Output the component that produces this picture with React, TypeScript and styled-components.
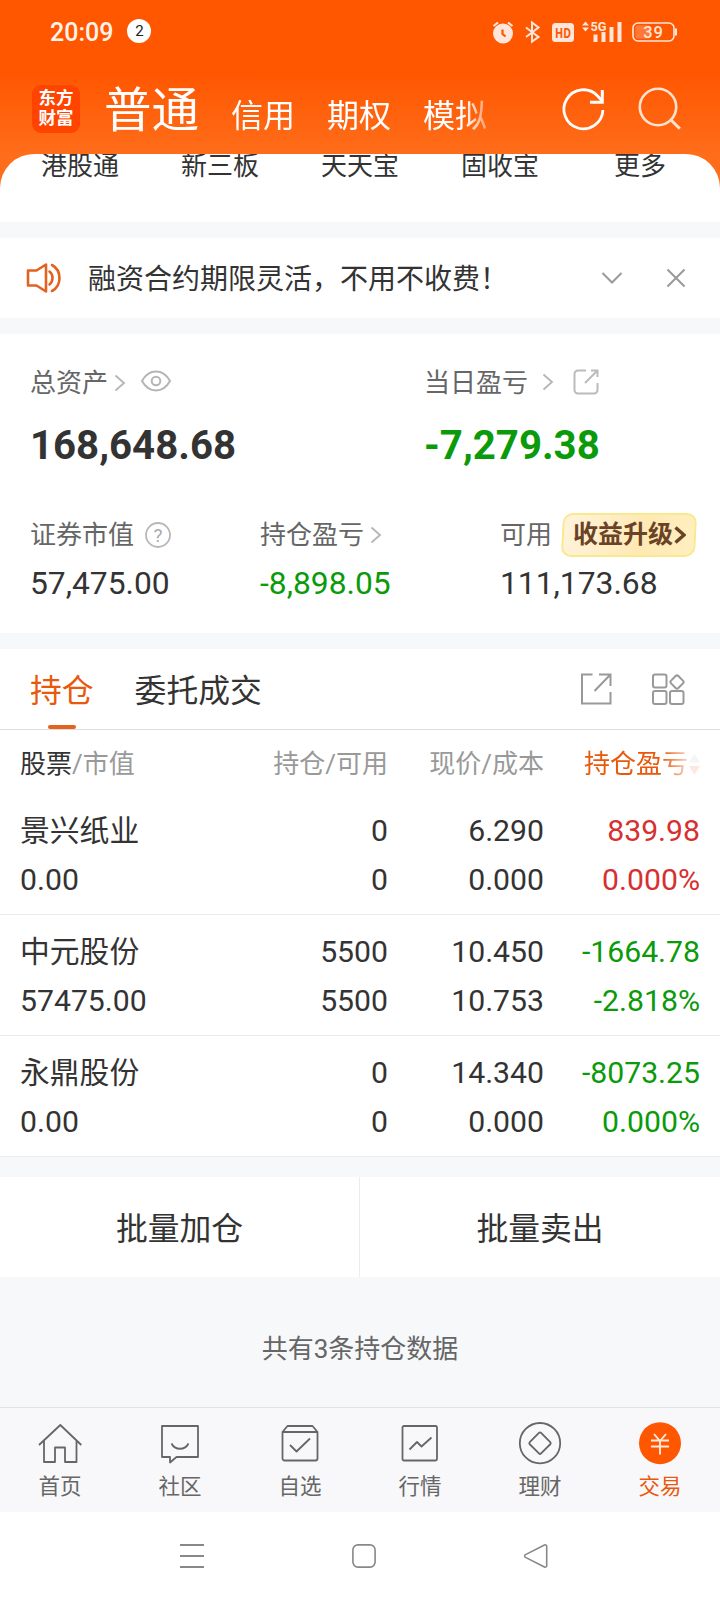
import React from "react";
import styled, { createGlobalStyle, css } from "styled-components";

const GlobalStyle = createGlobalStyle`
  * { box-sizing: border-box; }
  body {
    margin: 0;
    background: #f7f8fa;
    font-family: Roboto, "Noto Sans CJK SC", sans-serif;
    color: #333;
  }
  svg { display: block; flex: none; fill: none; }
`;

const ORANGE = "#e8590c";
const GREEN = "#0a9a0a";
const RED = "#d63031";

const Page = styled.div`
  width: 720px;
  height: 1600px;
  display: flex;
  flex-direction: column;
  overflow: hidden;
  background: #f7f8fa;
`;

/* ---------- header ---------- */

const Header = styled.header`
  height: 222px;
  flex: none;
  background: linear-gradient(#ff5600 0, #ff5600 72px, #ff6d1a 154px, #ff6d1a 222px);
`;

const StatusBar = styled.div`
  height: 64px;
  display: flex;
  align-items: center;
  padding: 0 42px 0 50px;
  color: #fff3ea;
`;

const Clock = styled.span`
  margin-top: 2px;
  font-size: 25px;
  font-weight: 500;
  line-height: 30px;
`;

const NoticeCount = styled.span`
  width: 24px;
  height: 24px;
  margin: 0 auto 2px 14px;
  border-radius: 50%;
  background: #fff;
  color: #222;
  font-size: 15px;
  line-height: 24px;
  text-align: center;
`;

const StatusIcons = styled.div`
  display: flex;
  gap: 8px;
`;

const TitleBar = styled.div`
  height: 90px;
  display: flex;
  align-items: center;
  padding: 0 36px 0 32px;
`;

const Logo = styled.div`
  width: 48px;
  height: 48px;
  padding-top: 3px;
  border-radius: 9px;
  background: #ff4400;
  color: #fff;
  font-size: 17.5px;
  font-weight: 700;
  line-height: 20px;
  text-align: center;
`;

const AccountTabs = styled.nav`
  width: 384px;
  margin: 9px auto 0 24px;
  display: flex;
  align-items: baseline;
  gap: 32px;
  white-space: nowrap;
  -webkit-mask-image: linear-gradient(90deg, #000 360px, rgba(0, 0, 0, 0.35) 384px);
  mask-image: linear-gradient(90deg, #000 360px, rgba(0, 0, 0, 0.35) 384px);
`;

const AccountTab = styled.span<{ $active?: boolean }>`
  color: #fff;
  font-size: ${(p) => (p.$active ? 47.5 : 32)}px;
  line-height: 64px;
`;

const TitleActions = styled.div`
  display: flex;
  gap: 28px;
`;

const QuickLinks = styled.nav`
  height: 68px;
  display: grid;
  grid-template-columns: repeat(5, 1fr);
  padding: 0 10px;
  border-radius: 34px 34px 0 0;
  background: #fff;
  overflow: hidden;
`;

const QuickLink = styled.span`
  margin-top: -4px;
  font-size: 26px;
  line-height: 32px;
  text-align: center;
`;

/* ---------- notice ---------- */

const Notice = styled.section`
  height: 80px;
  flex: none;
  margin: 16px 0;
  display: flex;
  align-items: center;
  padding: 0 32px 0 26px;
  background: #fff;
`;

const NoticeText = styled.span`
  margin: 3px auto 0 26px;
  font-size: 28px;
  line-height: 40px;
`;

const NoticeActions = styled.div`
  display: flex;
  gap: 40px;
`;

/* ---------- assets ---------- */

const Assets = styled.section`
  height: 299px;
  flex: none;
  padding: 28px 0 0 30px;
  background: #fff;
`;

const AssetRow = styled.div<{ $columns: string }>`
  display: grid;
  grid-template-columns: ${(p) => p.$columns};
`;

const MajorRow = styled(AssetRow)`
  height: 152px;
`;

const AssetLabel = styled.div`
  height: 42px;
  display: flex;
  align-items: center;
  font-size: 26px;
  line-height: 40px;
  color: #666;
  white-space: nowrap;
`;

const IconSlot = styled.span<{ $left: number; $up?: number }>`
  margin-left: ${(p) => p.$left}px;
  margin-bottom: ${(p) => p.$up ?? 0}px;
`;

const MajorValue = styled.div<{ $color?: string }>`
  margin-top: 18px;
  font-size: 40.2px;
  font-weight: 700;
  line-height: 48px;
  color: ${(p) => p.$color ?? "#333"};
`;

const MinorValue = styled.div<{ $color?: string }>`
  margin-top: 7px;
  font-size: 31.8px;
  line-height: 40px;
  color: ${(p) => p.$color ?? "#333"};
`;

const Upgrade = styled.span`
  position: relative;
  z-index: 0;
  width: 136px;
  height: 44px;
  margin-left: 9px;
  padding-left: 12px;
  display: flex;
  align-items: center;
  gap: 1px;
  color: #6a4327;
  font-size: 25px;
  font-weight: 700;
  &::before {
    content: "";
    position: absolute;
    z-index: -1;
    inset: 0 1px;
    border: 2px solid #fae88c;
    border-radius: 10px;
    background: linear-gradient(100deg, #fff3db, #ffe9b4 60%, #ffefc0);
    transform: skewX(-3deg);
  }
`;

/* ---------- positions ---------- */

const Positions = styled.section`
  flex: none;
  margin-top: 16px;
  background: #fff;
`;

const PositionTabs = styled.div`
  height: 81px;
  display: flex;
  padding: 0 35px 0 30px;
  border-bottom: 1px solid #dedede;
`;

const PositionTab = styled.div<{ $active?: boolean }>`
  height: 80px;
  margin-right: 41px;
  display: flex;
  flex-direction: column;
  align-items: center;
  justify-content: space-between;
  padding-top: 16px;
  font-size: 31.8px;
  line-height: 52px;
  color: ${(p) => (p.$active ? ORANGE : "#333")};
  ${(p) =>
    p.$active &&
    css`
      &::after {
        content: "";
        width: 28px;
        height: 4px;
        border-radius: 2px;
        background: #e5611c;
      }
    `}
`;

const PositionTools = styled.div`
  margin-left: auto;
  display: flex;
  align-items: center;
  gap: 39px;
`;

const Columns = styled.div`
  display: grid;
  grid-template-columns: 1fr 150px 156px 156px;
  padding: 0 20px;
`;

const TableHead = styled(Columns)`
  height: 64px;
  padding-top: 4px;
  align-items: center;
  font-size: 26px;
  line-height: 40px;
  color: #999;
`;

const HeadCell = styled.span<{ $first?: boolean }>`
  text-align: ${(p) => (p.$first ? "left" : "right")};
`;

const Strong = styled.span`
  color: #333;
`;

const SortedHead = styled.span`
  display: flex;
  align-items: center;
  justify-content: flex-end;
  gap: 1px;
  color: ${ORANGE};
  -webkit-mask-image: linear-gradient(90deg, #000 117px, rgba(0, 0, 0, 0.2) 146px);
  mask-image: linear-gradient(90deg, #000 117px, rgba(0, 0, 0, 0.2) 146px);
`;

const PositionRow = styled(Columns)`
  height: 121px;
  padding-top: 12px;
  border-bottom: 1px solid #ebebeb;
`;

const Cell = styled.div<{ $first?: boolean; $color?: string }>`
  display: flex;
  flex-direction: column;
  align-items: ${(p) => (p.$first ? "flex-start" : "flex-end")};
  font-size: 30.2px;
  line-height: 49px;
  color: ${(p) => p.$color ?? "#333"};
`;

const Amount = styled.span`
  height: 49px;
`;

const StockName = styled(Amount)`
  font-size: 29.8px;
`;

const BatchActions = styled.div`
  height: 100px;
  flex: none;
  margin-top: 20px;
  display: grid;
  grid-template-columns: 359px 1fr;
  background: #fff;
`;

const BatchButton = styled.button`
  border: 0;
  padding: 0 0 3px;
  background: none;
  font: inherit;
  font-size: 31.8px;
  color: #333;
  & + & { border-left: 1px solid #ececec; }
`;

const Summary = styled.p`
  flex: 1;
  margin: 0;
  padding-top: 52px;
  font-size: 26px;
  line-height: 40px;
  color: #666;
  text-align: center;
`;

/* ---------- bottom bars ---------- */

const TabBar = styled.nav`
  height: 105px;
  flex: none;
  display: grid;
  grid-template-columns: repeat(6, 1fr);
  border-top: 1px solid #e2e2e4;
  background: #f8f8fa;
`;

const TabItem = styled.div<{ $active?: boolean }>`
  display: flex;
  flex-direction: column;
  align-items: center;
  padding-top: 14px;
  font-size: 21.5px;
  line-height: 30px;
  color: ${(p) => (p.$active ? ORANGE : "#666")};
  svg { margin-bottom: 6px; }
`;

const SystemNav = styled.div`
  height: 88px;
  flex: none;
  display: flex;
  align-items: center;
  gap: 148px;
  padding-left: 180px;
  background: #fff;
`;

/* ---------- icons ---------- */

const AlarmIcon = () => (
  <svg width="22" height="24" viewBox="0 0 22 24" stroke="#ffe6da">
    <circle cx="11" cy="13.5" r="10" fill="#ffe6da" stroke="none" />
    <path d="M1.5 6 6 2.5M20.5 6 16 2.5" strokeWidth="2.2" />
    <path d="M10.5 9.5v4.5l3 2.5" stroke="#ff5600" strokeWidth="2.2" />
  </svg>
);

const BluetoothIcon = () => (
  <svg width="22" height="24" viewBox="0 0 22 24" stroke="#ffe6da" strokeWidth="2">
    <path d="M4 7.500 16.500 17l-6.500 4.500v-19l6.500 5L4 17" />
  </svg>
);

const HdText = styled.text`
  font: 700 13.5px "Open Sans", sans-serif;
  fill: #ff5600;
`;

const HdIcon = () => (
  <svg width="22" height="24" viewBox="0 0 22 24">
    <rect y="3" width="22" height="19" rx="3.5" fill="#ffe6da" />
    <HdText x="11" y="17.600" textAnchor="middle" textLength="16" lengthAdjust="spacingAndGlyphs">HD</HdText>
  </svg>
);

const NetworkText = styled.text`
  font: 700 12.5px Roboto, sans-serif;
  fill: #ffe6da;
`;

const SignalIcon = () => (
  <svg width="42" height="24" viewBox="0 0 42 24">
    <g fill="#ffe6da">
      <path d="M0 5.500 3.500 1.500 7 5.500zM0 7.500h7L3.500 11.500z" />
      <rect x="11.500" y="14.500" width="4" height="7.500" />
      <rect x="19.500" y="12" width="4" height="10" />
      <rect x="27.500" y="7" width="4" height="15" />
      <rect x="35.500" y="2" width="4" height="20" />
    </g>
    <NetworkText x="8.500" y="10.500" textLength="16" lengthAdjust="spacingAndGlyphs">5G</NetworkText>
  </svg>
);

const BatteryText = styled.text`
  font: 500 16.5px Roboto, sans-serif;
  letter-spacing: 0.8px;
  fill: #ffe6da;
`;

const BatteryIcon = () => (
  <svg width="46" height="24" viewBox="0 0 46 24">
    <rect x="3.500" y="5.500" width="15" height="13" rx="2" fill="#ff7a3a" />
    <rect x="1" y="3" width="41" height="18" rx="5" stroke="#ffe6da" strokeWidth="1.600" />
    <path d="M44 8.500v7" stroke="#ffe6da" strokeWidth="2" />
    <BatteryText x="21.500" y="17.800" textAnchor="middle">39</BatteryText>
  </svg>
);

const RefreshIcon = () => (
  <svg width="48" height="48" viewBox="560 85 48 48" stroke="#fff" strokeWidth="2.800">
    <path d="M602.900 110a19.500 19.500 0 1 1-5.500-14.300l5 5.500" />
    <path d="M602.300 90v12.300H590" strokeWidth="3" />
  </svg>
);

const SearchIcon = () => (
  <svg width="48" height="48" viewBox="636 85 48 48" stroke="#ffe2d0" strokeWidth="2.600">
    <circle cx="658" cy="107" r="18.200" />
    <path d="m670.500 119.500 9.300 9.300" strokeWidth="3" />
  </svg>
);

const SpeakerIcon = () => (
  <svg width="36" height="32" viewBox="0 0 36 32" stroke="#e2631f" strokeWidth="2.600" strokeLinejoin="round">
    <path d="M2 8.500h8.500L20 2.500v27l-9.500-6H2z" />
    <path d="M23.500 9.500c4 3 4 10 0 13M26 3c10 5.500 10 20.500 0 26" strokeLinecap="round" />
  </svg>
);

const DownIcon = () => (
  <svg width="24" height="24" viewBox="0 0 24 24" stroke="#999" strokeWidth="2">
    <path d="m2.500 7 9.500 9.500L21.500 7" />
  </svg>
);

const CloseIcon = () => (
  <svg width="24" height="24" viewBox="0 0 24 24" stroke="#999" strokeWidth="2">
    <path d="m3.500 3.500 17 17M20.500 3.500l-17 17" />
  </svg>
);

const ChevronIcon = ({ color = "#b5b5b5", weight = 1.8 }) => (
  <svg width="12" height="18" viewBox="0 0 12 18" stroke={color} strokeWidth={weight}>
    <path d="m1.500 1.500 8.500 7.500-8.500 7.500" />
  </svg>
);

const EyeIcon = () => (
  <svg width="30" height="22" viewBox="0 0 30 22" stroke="#b5b5b5" strokeWidth="2">
    <path d="M1 11C8-1.600 22-1.600 29 11 22 23.600 8 23.600 1 11z" strokeLinejoin="round" />
    <circle cx="15" cy="11" r="4.300" />
  </svg>
);

const ShareSoftIcon = () => (
  <svg width="26" height="26" viewBox="0 0 26 26" stroke="#bbb" strokeWidth="2">
    <path d="M13 1.500H5A3.500 3.500 0 0 0 1.500 5v16A3.500 3.500 0 0 0 5 24.500h16a3.500 3.500 0 0 0 3.500-3.500v-7" />
    <path d="M18 1.500h6.500V8M24.500 1.500 12 14" />
  </svg>
);

const HelpText = styled.text`
  font: 400 19px Roboto, sans-serif;
  fill: #aaa;
`;

const HelpIcon = () => (
  <svg width="26" height="26" viewBox="0 0 26 26">
    <circle cx="13" cy="13" r="12" stroke="#b8b8b8" strokeWidth="1.800" />
    <HelpText x="13" y="19.500" textAnchor="middle">?</HelpText>
  </svg>
);

const ShareIcon = () => (
  <svg width="32" height="32" viewBox="0 0 32 32" stroke="#999" strokeWidth="2">
    <path d="M12.500 1.500H2V30.500h28.500V19M19 1.500h11.500v11.500M30.500 1.500l-16 16.500" />
  </svg>
);

const GridIcon = () => (
  <svg width="34" height="34" viewBox="0 0 34 34" stroke="#999" strokeWidth="2">
    <rect x="2" y="2.500" width="13.500" height="13" rx="2" />
    <rect x="2" y="19" width="13.500" height="13" rx="2" />
    <rect x="19" y="19" width="13.500" height="13" rx="2" />
    <rect x="20.800" y="4.800" width="10.400" height="10.400" rx="2" transform="rotate(45 26 10)" />
  </svg>
);

const SortIcon = () => (
  <svg width="11" height="24" viewBox="0 0 11 24">
    <path d="M0 10.500 5.500 2 11 10.500z" fill="#ccc" />
    <path d="M0 14h11l-5.500 8.500z" fill="#f08a5a" />
  </svg>
);

const TabSvg = ({ children }: { children: React.ReactNode }) => (
  <svg width="44" height="44" viewBox="0 0 44 44" stroke="#666" strokeWidth="1.800" strokeLinejoin="round">
    {children}
  </svg>
);

const tabIcons: Record<string, React.ReactNode> = {
  home: (
    <TabSvg>
      <path d="M1 23 22.300 3 43.300 23M6 19v21h11V25.500h10V40h11.500V19" />
    </TabSvg>
  ),
  community: (
    <TabSvg>
      <path d="M4 4h36v31H18.500l-6.500 5.500V35H4zM13.500 21.500c3.500 7 13.500 7 17 0" />
    </TabSvg>
  ),
  watchlist: (
    <TabSvg>
      <path d="M4.500 10h35v26.500a2 2 0 0 1-2 2h-31a2 2 0 0 1-2-2zM4.500 10l5-6h25l5 6M12 23l6.500 6.500L32 16.500" />
    </TabSvg>
  ),
  market: (
    <TabSvg>
      <rect x="4.500" y="4" width="34.500" height="34.500" rx="1.500" />
      <path d="m11.500 27.500 7.500-7.500 4.500 4.500 10-9" />
    </TabSvg>
  ),
  wealth: (
    <TabSvg>
      <circle cx="22" cy="21.200" r="20.200" />
      <rect x="14" y="13.200" width="16" height="16" rx="1.500" transform="rotate(45 22 21.200)" />
    </TabSvg>
  ),
  trade: (
    <TabSvg>
      <circle cx="22" cy="21.200" r="21" fill="#ff5600" stroke="none" />
      <path d="m16 12 6 7 6-7M22 19v13.500M13 18.500h18M13 24.500h18" stroke="#ffeadf" strokeWidth="1.900" />
    </TabSvg>
  ),
};

/* ---------- data ---------- */

const quickLinks = ["港股通", "新三板", "天天宝", "固收宝", "更多"];

const positions = [
  { name: "景兴纸业", value: "0.00", held: "0", usable: "0", price: "6.290", cost: "0.000", profit: "839.98", rate: "0.000%", color: RED },
  { name: "中元股份", value: "57475.00", held: "5500", usable: "5500", price: "10.450", cost: "10.753", profit: "-1664.78", rate: "-2.818%", color: GREEN },
  { name: "永鼎股份", value: "0.00", held: "0", usable: "0", price: "14.340", cost: "0.000", profit: "-8073.25", rate: "0.000%", color: GREEN },
];

const tabs = [
  { icon: "home", label: "首页" },
  { icon: "community", label: "社区" },
  { icon: "watchlist", label: "自选" },
  { icon: "market", label: "行情" },
  { icon: "wealth", label: "理财" },
  { icon: "trade", label: "交易", active: true },
];

export default function App() {
  return (
    <Page>
      <GlobalStyle />
      <Header>
        <StatusBar>
          <Clock>20:09</Clock>
          <NoticeCount>2</NoticeCount>
          <StatusIcons>
            <AlarmIcon />
            <BluetoothIcon />
            <HdIcon />
            <SignalIcon />
            <BatteryIcon />
          </StatusIcons>
        </StatusBar>
        <TitleBar>
          <Logo>东方<br />财富</Logo>
          <AccountTabs>
            <AccountTab $active>普通</AccountTab>
            <AccountTab>信用</AccountTab>
            <AccountTab>期权</AccountTab>
            <AccountTab>模拟</AccountTab>
          </AccountTabs>
          <TitleActions>
            <RefreshIcon />
            <SearchIcon />
          </TitleActions>
        </TitleBar>
        <QuickLinks>
          {quickLinks.map((label) => (
            <QuickLink key={label}>{label}</QuickLink>
          ))}
        </QuickLinks>
      </Header>

      <Notice>
        <SpeakerIcon />
        <NoticeText>融资合约期限灵活，不用不收费！</NoticeText>
        <NoticeActions>
          <DownIcon />
          <CloseIcon />
        </NoticeActions>
      </Notice>

      <Assets>
        <MajorRow $columns="394px 1fr">
          <div>
            <AssetLabel>
              总资产
              <IconSlot $left={6}><ChevronIcon /></IconSlot>
              <IconSlot $left={15} $up={4}><EyeIcon /></IconSlot>
            </AssetLabel>
            <MajorValue>168,648.68</MajorValue>
          </div>
          <div>
            <AssetLabel>
              当日盈亏
              <IconSlot $left={14} $up={2}><ChevronIcon /></IconSlot>
              <IconSlot $left={19} $up={2}><ShareSoftIcon /></IconSlot>
            </AssetLabel>
            <MajorValue $color={GREEN}>-7,279.38</MajorValue>
          </div>
        </MajorRow>
        <AssetRow $columns="230px 240px 1fr">
          <div>
            <AssetLabel>
              证券市值
              <IconSlot $left={11}><HelpIcon /></IconSlot>
            </AssetLabel>
            <MinorValue>57,475.00</MinorValue>
          </div>
          <div>
            <AssetLabel>
              持仓盈亏
              <IconSlot $left={6}><ChevronIcon /></IconSlot>
            </AssetLabel>
            <MinorValue $color={GREEN}>-8,898.05</MinorValue>
          </div>
          <div>
            <AssetLabel>
              可用
              <Upgrade>
                收益升级
                <ChevronIcon color="#6a4327" weight={3.4} />
              </Upgrade>
            </AssetLabel>
            <MinorValue>111,173.68</MinorValue>
          </div>
        </AssetRow>
      </Assets>

      <Positions>
        <PositionTabs>
          <PositionTab $active>持仓</PositionTab>
          <PositionTab>委托成交</PositionTab>
          <PositionTools>
            <ShareIcon />
            <GridIcon />
          </PositionTools>
        </PositionTabs>
        <TableHead>
          <HeadCell $first><Strong>股票</Strong>/市值</HeadCell>
          <HeadCell>持仓/可用</HeadCell>
          <HeadCell>现价/成本</HeadCell>
          <SortedHead>持仓盈亏<SortIcon /></SortedHead>
        </TableHead>
        {positions.map((p) => (
          <PositionRow key={p.name}>
            <Cell $first><StockName>{p.name}</StockName><Amount>{p.value}</Amount></Cell>
            <Cell><Amount>{p.held}</Amount><Amount>{p.usable}</Amount></Cell>
            <Cell><Amount>{p.price}</Amount><Amount>{p.cost}</Amount></Cell>
            <Cell $color={p.color}><Amount>{p.profit}</Amount><Amount>{p.rate}</Amount></Cell>
          </PositionRow>
        ))}
      </Positions>

      <BatchActions>
        <BatchButton>批量加仓</BatchButton>
        <BatchButton>批量卖出</BatchButton>
      </BatchActions>
      <Summary>共有3条持仓数据</Summary>

      <TabBar>
        {tabs.map((tab) => (
          <TabItem key={tab.label} $active={tab.active}>
            {tabIcons[tab.icon]}
            {tab.label}
          </TabItem>
        ))}
      </TabBar>
      <SystemNav>
        <svg width="24" height="24" viewBox="0 0 24 24" stroke="#888" strokeWidth="1.900">
          <path d="M0 1h24M0 12h24M0 23h24" />
        </svg>
        <svg width="24" height="24" viewBox="0 0 24 24" stroke="#888" strokeWidth="1.600">
          <rect x="0.900" y="0.900" width="22.200" height="22.200" rx="5" />
        </svg>
        <svg width="24" height="24" viewBox="0 0 24 24" stroke="#888" strokeWidth="1.600" strokeLinejoin="round">
          <path d="M1.500 10.600 20.500 1a1.500 1.500 0 0 1 2.200 1.400v19.200a1.500 1.500 0 0 1-2.200 1.400L1.500 13.400a1.600 1.600 0 0 1 0-2.800z" />
        </svg>
      </SystemNav>
    </Page>
  );
}
